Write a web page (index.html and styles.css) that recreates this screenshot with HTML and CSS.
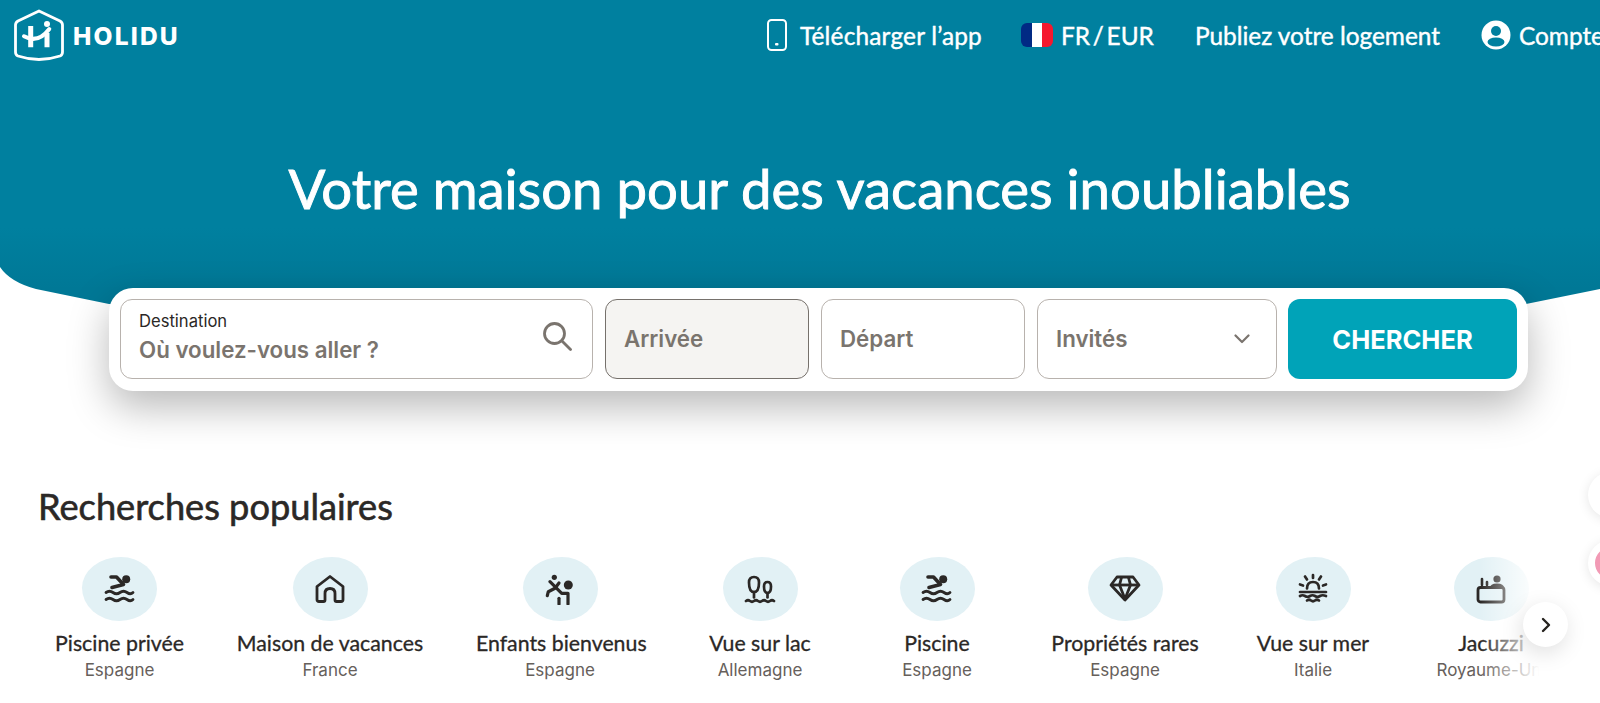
FILE: index.html
```html
<!DOCTYPE html>
<html lang="fr">
<head>
    <meta charset="UTF-8">
    <title>Holidu</title>
    <link rel="stylesheet" href="styles.css">
</head>
<body>

<div id="page">
    <svg class="hero-shape" width="1600" height="310" viewBox="0 0 1600 310" aria-hidden="true">
        <defs>
            <linearGradient id="heroFill" x1="0" y1="0" x2="0" y2="1">
                <stop offset="0.75" stop-color="#00809f"/>
                <stop offset="0.95" stop-color="#007896"/>
            </linearGradient>
        </defs>
        <path d="M0 0H1600V289L1526 304Q800 290 109 304L36 289Q10 282 0 267Z" fill="url(#heroFill)"/>
    </svg>

    <header id="topbar">
        <a class="logo" href="#">
            <svg width="52" height="54" viewBox="0 0 52 54">
                <path d="M26 2L47 12Q49.5 13.5 49.5 16V43Q49.5 46 47 47Q26 54 5 47Q2.5 46 2.5 43V16Q2.5 13.5 5 12Z" fill="none" stroke="#fff" stroke-width="2.8" stroke-linejoin="round"/>
                <path d="M17.7 17V38.3M34 24V38.3" stroke="#fff" stroke-width="5" fill="none"/>
                <path d="M11 27.3Q25 35 36.3 20" stroke="#fff" stroke-width="4" fill="none" stroke-linecap="round"/>
                <circle cx="34" cy="15" r="3" fill="#fff"/>
            </svg>
            <span>HOLIDU</span>
        </a>
        <nav class="nav">
            <a class="nav-link nav-app" href="#">
                <svg width="20" height="32" viewBox="0 0 20 32"><rect x="1" y="1" width="18" height="30" rx="3.5" fill="none" stroke="#fff" stroke-width="2"/><rect x="8" y="24" width="3.5" height="2.5" rx="1" fill="#fff"/></svg>
                Télécharger l’app
            </a>
            <a class="nav-link flag-link nav-lang" href="#">
                <svg width="32" height="24" viewBox="0 0 32 24"><defs><clipPath id="flagClip"><rect width="32" height="24" rx="6"/></clipPath></defs><g clip-path="url(#flagClip)"><rect width="11" height="24" fill="#012a84"/><rect x="11" width="10" height="24" fill="#fff"/><rect x="21" width="11" height="24" fill="#f5182f"/></g></svg>
                FR / EUR
            </a>
            <a class="nav-link" href="#">Publiez votre logement</a>
            <a class="nav-link flag-link" href="#">
                <svg width="30" height="30" viewBox="0 0 30 30"><circle cx="15" cy="15" r="14.5" fill="#fff"/><circle cx="15" cy="11" r="5" fill="#00809f"/><ellipse cx="15" cy="22" rx="8.5" ry="4.6" fill="#00809f"/></svg>
                Compte
            </a>
        </nav>
    </header>

    <h1 class="hero-title">Votre maison pour des vacances inoubliables</h1>

    <form class="search-card">
        <div class="field field-dest">
            <div>
                <div class="field-label">Destination</div>
                <div class="field-value">Où voulez-vous aller ?</div>
            </div>
            <svg width="30" height="30" viewBox="0 0 30 30"><circle cx="12.5" cy="12.5" r="10" fill="none" stroke="#7a746e" stroke-width="2.8"/><path d="M20 20L28.5 28.5" stroke="#7a746e" stroke-width="2.8" stroke-linecap="round"/></svg>
        </div>
        <div class="field field-active"><span class="field-value">Arrivée</span></div>
        <div class="field"><span class="field-value">Départ</span></div>
        <div class="field field-guests">
            <span class="field-value">Invités</span>
            <svg width="16" height="10" viewBox="0 0 16 10"><path d="M1.5 1.5L8 8L14.5 1.5" fill="none" stroke="#7a746e" stroke-width="2.2" stroke-linecap="round" stroke-linejoin="round"/></svg>
        </div>
        <button class="search-btn" type="button">CHERCHER</button>
    </form>

    <section class="popular">
        <h2 class="popular-title">Recherches populaires</h2>
        <div class="cat-row">
            <div class="cat">
                <div class="cat-icon">
                    <svg width="32" height="32" viewBox="0 0 32 32"><use href="#icoSwim"/></svg>
                </div>
                <div class="cat-name">Piscine privée</div>
                <div class="cat-place">Espagne</div>
            </div>
            <div class="cat">
                <div class="cat-icon">
                    <svg width="32" height="32" viewBox="0 0 32 32"><path d="M16 3.5L29 13.5V26.5Q29 28.5 27 28.5H22.5Q21 28.5 21 27V20.5Q21 15.5 16 15.5Q11 15.5 11 20.5V27Q11 28.5 9.5 28.5H5Q3 28.5 3 26.5V13.5Z" fill="none" stroke="#2b2826" stroke-width="2.8" stroke-linejoin="round"/></svg>
                </div>
                <div class="cat-name">Maison de vacances</div>
                <div class="cat-place">France</div>
            </div>
            <div class="cat">
                <div class="cat-icon">
                    <svg width="32" height="32" viewBox="0 0 32 32"><g fill="none" stroke="#2b2826" stroke-width="3.2" stroke-linecap="round" stroke-linejoin="round"><path d="M6 8.7L17.7 20.3H24V31"/><path d="M15 25.3V31"/><path d="M15 10L11 15.3L4.3 18.7L3.3 22.7"/></g><circle cx="10.3" cy="4.3" r="2.6" fill="#2b2826"/><circle cx="24.3" cy="12" r="4.5" fill="#2b2826"/></svg>
                </div>
                <div class="cat-name">Enfants bienvenus</div>
                <div class="cat-place">Espagne</div>
            </div>
            <div class="cat">
                <div class="cat-icon">
                    <svg width="32" height="32" viewBox="0 0 32 32"><g fill="none" stroke="#2b2826" stroke-width="2.7" stroke-linecap="round"><path d="M10 4Q15 4 15 9.5Q15 19 10 19Q5 19 5 9.5Q5 4 10 4Z"/><path d="M10 19V24.5"/><path d="M23.5 9Q27 9 27 13.5Q27 20 23.5 20Q20 20 20 13.5Q20 9 23.5 9Z"/><path d="M23.5 20V24.5"/><path d="M2 28Q4 26.5 6 28T10 28T14 28T18 28T22 28T26 28T30 28"/></g></svg>
                </div>
                <div class="cat-name">Vue sur lac</div>
                <div class="cat-place">Allemagne</div>
            </div>
            <div class="cat">
                <div class="cat-icon">
                    <svg width="32" height="32" viewBox="0 0 32 32"><use href="#icoSwim"/></svg>
                </div>
                <div class="cat-name">Piscine</div>
                <div class="cat-place">Espagne</div>
            </div>
            <div class="cat">
                <div class="cat-icon">
                    <svg width="32" height="32" viewBox="0 0 32 32"><g fill="none" stroke="#2b2826" stroke-width="2.8" stroke-linejoin="round"><path d="M8 4H24L30 12L16 27L2 12Z"/><path d="M2.5 12H29.5"/><path d="M12.5 4.5L10.5 12L16 26L21.5 12L19.5 4.5"/></g></svg>
                </div>
                <div class="cat-name">Propriétés rares</div>
                <div class="cat-place">Espagne</div>
            </div>
            <div class="cat">
                <div class="cat-icon">
                    <svg width="32" height="32" viewBox="0 0 32 32"><g fill="none" stroke="#2b2826" stroke-width="2.7" stroke-linecap="round"><path d="M10 15.5Q10 9 16 9Q22 9 22 15.5"/><path d="M16 2V5M8 3.5L10 6.5M24 3.5L22 6.5M3 11.5L6 12.5M29 11.5L26 12.5"/><path d="M3 19H29"/><path d="M3 23Q5.5 21.5 8 23T13 23T18 23T23 23T29 23"/><path d="M10 27.5Q12 26 14 27.5T18 27.5T22 27.5"/></g></svg>
                </div>
                <div class="cat-name">Vue sur mer</div>
                <div class="cat-place">Italie</div>
            </div>
            <div class="cat">
                <div class="cat-icon">
                    <svg width="32" height="32" viewBox="0 0 32 32"><rect x="3" y="14.5" width="26" height="14.5" rx="2.5" fill="none" stroke="#2b2826" stroke-width="2.8"/><circle cx="22" cy="6" r="3.6" fill="#2b2826"/><path d="M15 15Q15 10.5 22 10.5Q29 10.5 29 15Z" fill="#2b2826"/><path d="M7 6V12M12 9V12" stroke="#2b2826" stroke-width="2.6" stroke-linecap="round"/></svg>
                </div>
                <div class="cat-name">Jacuzzi</div>
                <div class="cat-place">Royaume-Uni</div>
            </div>
        </div>
        <div class="cat-fade"></div>
        <button class="cat-next" type="button" aria-label="Suivant">
            <svg width="12" height="16" viewBox="0 0 12 16"><path d="M3 2L9 8L3 14" fill="none" stroke="#26231f" stroke-width="2.4" stroke-linecap="round" stroke-linejoin="round"/></svg>
        </button>
    </section>

    <div class="side-bubble side-white"></div>
    <div class="side-bubble side-pink"></div>

    <svg width="0" height="0" class="defs-only">
        <symbol id="icoSwim" viewBox="0 0 32 32">
            <g fill="none" stroke="#2b2826" stroke-linecap="round" stroke-linejoin="round">
                <path d="M2 19.5Q5.5 17 9 19.5T16 19.5T23 19.5T29 19.5" stroke-width="2.8"/>
                <path d="M2 26.5Q5.5 24 9 26.5T16 26.5T23 26.5T29 26.5" stroke-width="2.8"/>
                <path d="M7 4H12.5L19.5 11.5L8 14.5" stroke-width="3.6"/>
            </g>
            <circle cx="22.2" cy="6.3" r="4" fill="#2b2826"/>
        </symbol>
    </svg>
</div>

</body>
</html>
```

FILE: styles.css
```css
* {
    box-sizing: border-box;
}

html, body {
    margin: 0;
    padding: 0;
    background: #fff;
    overflow: hidden;
}

a {
    color: inherit;
    text-decoration: none;
}

#page {
    position: relative;
    width: 1600px;
    height: 703px;
    overflow: hidden;
    font-family: "Lato", "Liberation Sans", sans-serif;
}

.hero-shape {
    position: absolute;
    top: 0;
    left: 0;
}

.defs-only {
    position: absolute;
}

#topbar {
    position: relative;
    display: flex;
    align-items: center;
    justify-content: space-between;
    height: 72px;
    padding-left: 13px;
    color: #fff;
    white-space: nowrap;
}

.logo {
    display: flex;
    align-items: center;
    gap: 8px;
    font-family: "Inter", sans-serif;
    font-size: 24.5px;
    font-weight: 800;
    letter-spacing: 2.2px;
}

.nav {
    display: flex;
    align-items: center;
    gap: 41px;
    margin-right: -4px;
    padding-bottom: 2px;
    font-size: 24.4px;
    -webkit-text-stroke: 0.4px #fff;
}

.nav-link {
    display: flex;
    align-items: center;
    gap: 13px;
}

.nav-app {
    margin-right: -2px;
    letter-spacing: 0.2px;
}

.nav-lang {
    word-spacing: -3.5px;
}

.flag-link {
    gap: 8px;
}

.hero-title {
    position: relative;
    margin: 76px 0 0;
    padding-left: 39px;
    height: 80px;
    color: #fff;
    font-size: 54.5px;
    line-height: 80px;
    font-weight: 400;
    -webkit-text-stroke: 0.9px #fff;
    text-align: center;
}

.search-card {
    position: relative;
    display: flex;
    gap: 12px;
    width: 1419px;
    height: 103px;
    margin: 60px 0 0 109px;
    padding: 11px 11px;
    background: #fff;
    border-radius: 24px;
    box-shadow: 0 16px 40px rgba(0, 0, 0, 0.28);
}

.field {
    display: flex;
    align-items: center;
    justify-content: space-between;
    width: 204px;
    height: 80px;
    padding: 0 18px;
    background: #fff;
    border: 1.5px solid #b8b2ad;
    border-radius: 12px;
}

.field-dest {
    width: 473px;
    padding-right: 20px;
    padding-bottom: 6px;
}

.field-guests {
    width: 240px;
    padding-right: 26px;
}

.field-active {
    background: #f5f4f2;
    border-color: #76716c;
}

.field-label {
    margin-bottom: 3px;
    color: #2b2826;
    font-family: "Inter", sans-serif;
    font-size: 16.6px;
    line-height: 24px;
}

.field-value {
    color: #7a746e;
    font-family: "Inter", sans-serif;
    font-size: 22.3px;
    line-height: 28px;
    font-weight: 600;
}

.search-btn {
    width: 229px;
    height: 80px;
    margin-left: -1px;
    padding: 0;
    color: #fff;
    background: #00a3b8;
    border: 0;
    border-radius: 12px;
    font-family: "Inter", sans-serif;
    font-size: 25.5px;
    font-weight: 700;
}

.popular {
    position: relative;
    margin-top: 0;
}

.popular-title {
    margin: 0;
    padding: 91px 0 0 38px;
    color: #2b2826;
    font-size: 36.2px;
    line-height: 48px;
    font-weight: 400;
    -webkit-text-stroke: 0.6px #2b2826;
}

.cat-row {
    display: grid;
    grid-template-columns: 129px 192px 168px 132px 122px 154px 122px 134px;
    gap: 50px;
    width: 1545px;
    margin-top: 27px;
    padding-left: 55px;
    overflow: hidden;
    white-space: nowrap;
    text-align: center;
}

.cat-icon {
    display: flex;
    align-items: center;
    justify-content: center;
    width: 75px;
    height: 64px;
    margin: 0 auto 8px;
    background: #e2f1f5;
    border-radius: 52% 48% 50% 50% / 48% 50% 50% 52%;
}

.cat-name {
    color: #2b2826;
    font-size: 21.3px;
    line-height: 28px;
    -webkit-text-stroke: 0.3px #2b2826;
}

.cat-place {
    margin-top: 1px;
    color: #66605b;
    font-family: "Inter", sans-serif;
    font-size: 17px;
    line-height: 24px;
}

.cat-fade {
    position: absolute;
    top: 120px;
    left: 1480px;
    width: 70px;
    height: 200px;
    background: linear-gradient(to right, rgba(255, 255, 255, 0), #fff 85%);
}

.cat-next {
    position: absolute;
    top: 211px;
    left: 1523px;
    display: flex;
    align-items: center;
    justify-content: center;
    width: 45px;
    height: 45px;
    padding: 0;
    background: #fff;
    border: 0;
    border-radius: 50%;
    box-shadow: -2px 6px 22px rgba(0, 0, 0, 0.13);
}

.side-bubble {
    position: absolute;
    left: 1588px;
    width: 46px;
    height: 46px;
    border-radius: 50%;
}

.side-white {
    top: 472px;
    background: #fff;
    box-shadow: 0 2px 12px rgba(0, 0, 0, 0.1);
}

.side-pink {
    top: 540px;
    background: #f29ab5;
    border: 7px solid #fff;
    box-shadow: 0 2px 12px rgba(0, 0, 0, 0.1);
}
```
